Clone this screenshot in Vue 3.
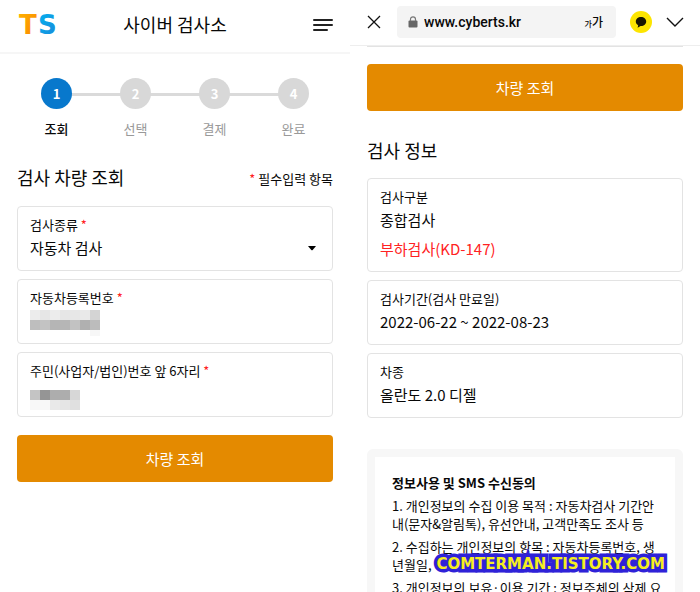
<script setup>
import { ref } from 'vue'

const steps = ['조회', '선택', '결제', '완료']
const kinds = ['자동차 검사']
const kind = ref(kinds[0])

const maskedFields = [
  {
    id: 'plate',
    label: '자동차등록번호',
    shift: false,
    rows: [
      ['#ececec', '#e6e6e6', '#ececec', '#e6e6e6', '#e7e7e7', '#e9e9e9', '#d4d4d4'],
      ['#bebebe', '#c3c3c3', '#b5b5b5', '#b6b6b6', '#c2c2c2', '#b0b0b0', '#bcbcbc'],
      ['#fff', '#fff', '#fff', '#fff', '#fff', '#fff', '#f7f7f7'],
    ],
  },
  {
    id: 'owner',
    label: '주민(사업자/법인)번호 앞 6자리',
    shift: true,
    rows: [
      ['#c4c4c4', '#959595', '#adadad', '#adadad', '#d7d7d7'],
      ['#f8f8f8', '#f8f8f8', '#e9e9e9', '#e5e5e5', '#e0e0e0'],
    ],
  },
]

const results = [
  { label: '검사구분', value: '종합검사', extra: '부하검사(KD-147)' },
  { label: '검사기간(검사 만료일)', value: '2022-06-22 ~ 2022-08-23' },
  { label: '차종', value: '올란도 2.0 디젤' },
]
</script>

<template>
  <main class="screens">
    <section class="screen">
      <header class="site-bar">
        <a class="logo" href="#" aria-label="TS">
          <svg width="44" height="36" viewBox="0 0 44 36">
            <defs>
              <linearGradient id="warm" x1="0" y1="0" x2="1" y2="1">
                <stop offset="0" stop-color="#ffb400" />
                <stop offset="1" stop-color="#f98200" />
              </linearGradient>
              <linearGradient id="cool" x1="0" y1="0" x2="1" y2="1">
                <stop offset="0" stop-color="#00b4f0" />
                <stop offset="1" stop-color="#1c86d8" />
              </linearGradient>
            </defs>
            <text class="mark" x="2" y="28" fill="url(#warm)">T</text>
            <text class="mark" x="21" y="28" fill="url(#cool)">S</text>
          </svg>
        </a>
        <h1>사이버 검사소</h1>
        <button class="icon-button menu" type="button" aria-label="메뉴">
          <svg width="20" height="14" viewBox="0 0 20 14" fill="none" stroke="#222" stroke-width="2" stroke-linecap="round">
            <path d="M1 3H19M1 8H19M1 13H14" />
          </svg>
        </button>
      </header>

      <ol class="steps">
        <li v-for="(step, i) in steps" :key="step" :class="{ active: i === 0 }">
          <span class="dot">{{ i + 1 }}</span>
          <span class="name">{{ step }}</span>
        </li>
      </ol>

      <form class="content" @submit.prevent>
        <div class="heading">
          <h2>검사 차량 조회</h2>
          <p class="required"><i>*</i> 필수입력 항목</p>
        </div>
        <div class="stack">
          <div class="card">
            <label class="caption" for="kind">검사종류 <i>*</i></label>
            <div class="select-row">
              <select id="kind" v-model="kind" class="value">
                <option v-for="k in kinds" :key="k">{{ k }}</option>
              </select>
              <svg class="arrow" width="8" height="5" viewBox="0 0 8 5"><path d="M0 0H8L4.700 4Q4 4.600 3.300 4Z" fill="#000" /></svg>
            </div>
          </div>
          <div v-for="field in maskedFields" :key="field.id" class="card">
            <label class="caption" :for="field.id">{{ field.label }} <i>*</i></label>
            <div class="masked" :class="{ low: field.shift }">
              <input :id="field.id" class="value" type="text" />
              <svg class="mosaic" :width="field.rows[0].length * 10" height="26" shape-rendering="crispEdges">
                <template v-for="(row, y) in field.rows" :key="y">
                  <rect v-for="(c, x) in row" :key="x" :x="x * 10" :y="y * 10" width="10" height="10" :fill="c" />
                </template>
              </svg>
            </div>
          </div>
        </div>
        <button class="submit" type="submit">차량 조회</button>
      </form>
    </section>

    <section class="screen">
      <header class="browser-bar">
        <button class="icon-button close" type="button" aria-label="닫기">
          <svg width="14" height="14" viewBox="0 0 14 14" fill="none" stroke="#111" stroke-width="1.300">
            <path d="M1 1L13 13M13 1L1 13" />
          </svg>
        </button>
        <div class="address">
          <svg width="10" height="12" viewBox="0 0 10 12">
            <rect x="0.500" y="4.500" width="9" height="7" rx="1" fill="#666" />
            <path d="M2.500 5V3.300A2.500 2.500 0 0 1 7.500 3.300V5" fill="none" stroke="#777" stroke-width="1.200" />
          </svg>
          <input type="text" value="www.cyberts.kr" aria-label="주소" />
          <button class="icon-button zoom" type="button"><small>가</small>가</button>
        </div>
        <button class="icon-button" type="button" aria-label="카카오톡">
          <svg width="22" height="22" viewBox="0 0 22 22">
            <circle cx="11" cy="11" r="11" fill="#fde500" />
            <path d="M11 6C8 6 5.800 7.900 5.800 10.500C5.800 12.200 6.800 13.500 8.200 14.300L7.600 16.800L10.600 15H11C14 15 16.200 13 16.200 10.500C16.200 7.900 14 6 11 6Z" fill="#181600" />
          </svg>
        </button>
        <button class="icon-button" type="button" aria-label="접기">
          <svg width="18" height="10" viewBox="0 0 18 10" fill="none" stroke="#111" stroke-width="1.400">
            <path d="M1 1L9 9L17 1" />
          </svg>
        </button>
      </header>

      <div class="content">
        <div class="card-end"></div>
        <button class="submit" type="button">차량 조회</button>
        <h2 class="result-title">검사 정보</h2>
        <dl class="stack">
          <div v-for="r in results" :key="r.label" class="card">
            <dt class="caption">{{ r.label }}</dt>
            <dd class="value">{{ r.value }}</dd>
            <dd v-if="r.extra" class="value extra">{{ r.extra }}</dd>
          </div>
        </dl>
        <article class="consent">
          <h3>정보사용 및 SMS 수신동의</h3>
          <p>1. 개인정보의 수집 이용 목적 : 자동차검사 기간안내(문자&amp;알림톡), 유선안내, 고객만족도 조사 등</p>
          <p>2. 수집하는 개인정보의 항목 : 자동차등록번호, 생년월일,</p>
          <p>3. 개인정보의 보유·이용 기간 : 정보주체의 삭제 요</p>
          <span class="watermark">COMTERMAN.TISTORY.COM</span>
        </article>
      </div>
    </section>
  </main>
</template>

<style>
body {
  background: #fff;
}
</style>

<style scoped>
.screens,
.screens * {
  box-sizing: border-box;
}
.screens {
  display: grid;
  grid-template-columns: 1fr 1fr;
  height: 100vh;
  overflow: hidden;
  color: #080808;
  font-family: "Noto Sans CJK KR", sans-serif;
}
.screens h1,
.screens h2,
.screens h3,
.screens p,
.screens dl,
.screens dd,
.screens ol {
  margin: 0;
  padding: 0;
  font-weight: 400;
}
.screens button,
.screens input,
.screens select {
  margin: 0;
  padding: 0;
  border: 0;
  background: none;
  color: inherit;
  font-family: inherit;
}
.screens i {
  color: #f22;
  font-style: normal;
}
.screen {
  min-width: 0;
}
.screen svg {
  display: block;
}
.icon-button {
  flex: none;
  cursor: pointer;
}
.site-bar {
  display: grid;
  grid-template-columns: 1fr auto 1fr;
  align-items: center;
  height: 54px;
  padding: 0 17px 4px;
  border-bottom: 2px solid #f6f6f6;
}
.logo {
  justify-self: start;
}
.mark {
  font: 700 26px "DejaVu Sans", sans-serif;
}
.site-bar h1 {
  font-size: 18px;
  line-height: 26px;
}
.menu {
  justify-self: end;
}
.steps {
  display: grid;
  grid-template-columns: repeat(4, 1fr);
  padding: 24px 17px 0 !important;
  list-style: none;
}
.steps li {
  display: flex;
  flex-direction: column;
  align-items: center;
  gap: 10px;
  position: relative;
  color: #999;
  font-size: 13px;
  line-height: 20px;
}
.steps li + li::before {
  content: "";
  position: absolute;
  top: 15px;
  right: 50%;
  width: 100%;
  height: 3px;
  background: #dadada;
}
.dot {
  position: relative;
  z-index: 1;
  width: 31px;
  height: 31px;
  border-radius: 50%;
  background: #d8d8d8;
  color: #fff;
  font-weight: 700;
  line-height: 31px;
  text-align: center;
}
.steps .active {
  color: #080808;
  font-weight: 500;
}
.active .dot {
  z-index: 2;
  background: #0878cc;
}
.content {
  padding: 0 17px;
}
.heading {
  display: flex;
  justify-content: space-between;
  align-items: flex-end;
  padding: 24px 0 15px;
}
h2 {
  font-size: 18px;
  line-height: 28px;
}
.required {
  font-size: 13px;
  line-height: 24px;
}
.stack {
  display: grid;
  gap: 8px;
}
.card {
  min-height: 65px;
  padding: 8px 12px 9px;
  border: 1px solid #e3e3e3;
  border-radius: 4px;
}
.caption {
  display: block;
  font-size: 13px;
  line-height: 20px;
}
.value {
  display: block;
  font-size: 15px;
  line-height: 26px;
}
.select-row {
  display: flex;
  align-items: center;
  padding-right: 4px;
}
select.value {
  flex: 1;
  height: 26px;
  appearance: none;
}
input.value {
  width: 100%;
  height: 26px;
}
.extra {
  margin-top: 3px !important;
  color: #f22;
}
.masked {
  position: relative;
}
.mosaic {
  position: absolute;
  top: 2px;
  left: 0;
}
.low .mosaic {
  top: 9px;
}
.submit {
  display: block;
  width: 100%;
  height: 47px;
  border-radius: 4px !important;
  background: #e48a00 !important;
  color: #fff !important;
  font-size: 15px;
  cursor: pointer;
}
.stack + .submit {
  margin-top: 18px !important;
}
.browser-bar {
  display: flex;
  align-items: center;
  gap: 14px;
  height: 46px;
  padding: 0 16px 2px 17px;
  border-bottom: 1px solid #eee;
}
.close {
  margin-right: 2px !important;
}
.address {
  display: flex;
  flex: 1;
  align-items: center;
  gap: 6px;
  min-width: 0;
  height: 32px;
  padding: 0 13px 0 11px;
  border-radius: 4px;
  background: #f4f4f4;
}
.address input {
  flex: 1;
  min-width: 0;
  font: 500 14px Roboto, sans-serif;
}
.zoom {
  font-size: 12px;
  font-weight: 500;
}
.zoom small {
  font-size: 8px;
}
.card-end {
  height: 1px;
  margin-bottom: 17px;
  background: #e3e3e3;
}
.result-title {
  padding: 25px 0 14px !important;
}
.consent {
  position: relative;
  margin-top: 31px;
  padding: 17px 12px 0 17px;
  border: 8px solid #f7f7f7;
  border-radius: 6px;
  font-size: 13px;
  line-height: 18px;
  word-break: break-all;
}
.consent h3 {
  margin-bottom: 5px;
  font-size: 13px;
  font-weight: 700;
}
.consent p {
  margin-bottom: 5px;
}
.watermark {
  position: absolute;
  top: 98px;
  right: 10px;
  color: #f5ee20;
  font: 700 15px/18px "DejaVu Sans", sans-serif;
  white-space: nowrap;
  -webkit-text-stroke: 7px #2f22d8;
  paint-order: stroke fill;
  stroke-linejoin: round;
}
</style>
